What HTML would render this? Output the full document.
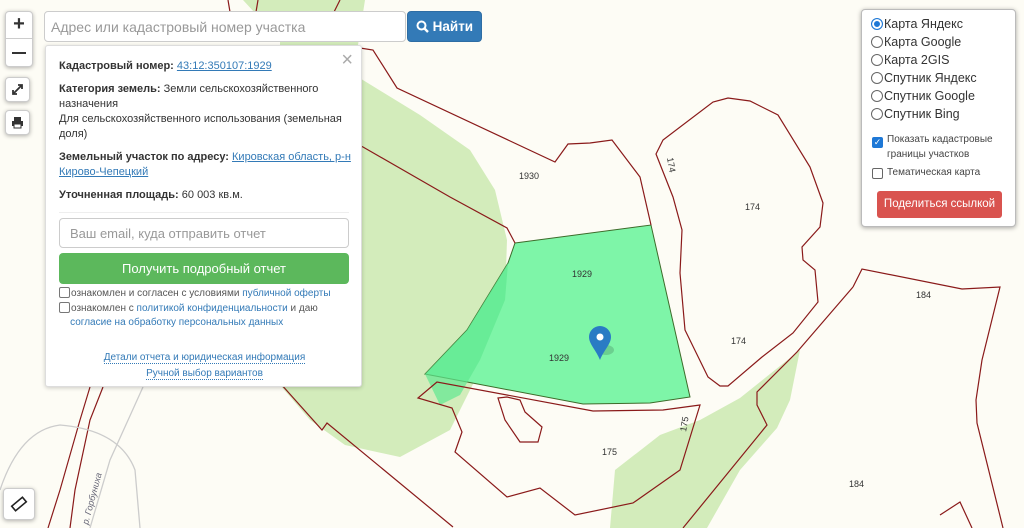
<!DOCTYPE html>
<html><head><meta charset="utf-8"><style>
*{box-sizing:border-box}
body{margin:0;width:1024px;height:528px;overflow:hidden;background:#fdfcf5;font-family:"Liberation Sans",Arial,sans-serif;position:relative}
svg.map{position:absolute;left:0;top:0}
.abs{position:absolute}
.btn{position:absolute;background:#fff;border:1px solid #ccc;border-radius:4px;box-shadow:0 1px 4px rgba(0,0,0,.3)}
.panel{left:45px;top:45px;width:317px;height:342px;background:#fff;border:1px solid #ddd;border-radius:3px;box-shadow:0 1px 4px rgba(0,0,0,.2);font-size:11px;color:#333}
.panel p{margin:0;position:absolute;left:13px;line-height:15px;white-space:nowrap}
b{font-weight:bold}
a{color:#337ab7;text-decoration:underline}
.cb{display:inline-block;width:11px;height:11px;border:1px solid #777;border-radius:2px;vertical-align:-2px;margin-right:1px;background:#fff}
.lk{color:#337ab7}
.dl{color:#337ab7;border-bottom:1px dotted #337ab7}
.rp{left:861px;top:9px;width:155px;height:218px;background:#fff;border:1px solid #bbb;border-radius:4px;box-shadow:0 1px 5px rgba(0,0,0,.35);font-size:12.5px;color:#333}
.rd{position:absolute;left:9px;line-height:18px}
.rd i{display:inline-block;width:12px;height:12px;border:1px solid #666;border-radius:50%;vertical-align:-2px;margin-right:1px}
</style></head><body>
<svg class="map" width="1024" height="528" viewBox="0 0 1024 528">
<g fill="#d3ecbb" stroke="none">
<polygon points="243,0 365,0 358,45 358,77 420,115 470,150 495,190 507,240 505,300 475,380 450,430 400,457 345,445 310,420 280,385 280,40"/>
<polygon points="800,350 790,400 777,428 740,470 707,528 610,528 615,470 660,435 700,420 740,398"/>
</g>
<polygon points="515,243 651,225 690,397 650,403 583,404 425,374 467,330 508,263" fill="#7ef5a8" stroke="#3d6b2a" stroke-width="1"/>
<polygon points="425,374 467,330 508,263 505,300 480,360 460,395 440,405" fill="#60e890" opacity=".7"/>
<g fill="none" stroke="#8a1a1a" stroke-width="1.2">
<polyline points="360,48 373,50 397,88 555,162 568,144 590,143 612,140 640,177 651,225"/>
<polyline points="260,100 363,147 450,197 507,228 515,243"/>
<polyline points="228,0 230,12"/><polyline points="258,0 256,12"/><polyline points="340,0 333,14"/>
<polygon points="656,154 663,140 713,102 728,98 750,101 778,115 810,167 823,203 820,227 802,247 803,260 815,270 818,302 793,333 762,357 728,386 720,386 708,377 685,330 680,273 682,230 673,197"/>
<polyline points="853,287 862,269 962,289 1000,287 982,360 976,400 977,423 1003,528"/>
<polyline points="853,287 797,352 757,392 757,405 767,425 683,528"/>
<polyline points="972,528 960,502 940,515"/>
<polygon points="437,382 418,398 452,408 462,432 455,452 507,497 540,488 575,515 633,503 680,470 700,405 663,410 593,411"/>
<polygon points="498,398 507,397 520,400 525,412 542,427 538,442 520,442 505,420"/>
<polyline points="280,383 322,430 327,423 453,527"/>
<polyline points="90,387 80,420 60,490 48,528"/>
<polyline points="103,387 90,420 75,490 70,528"/>
</g>
<g fill="none" stroke="#ccc" stroke-width="1.3">
<polyline points="143,387 110,460 90,528"/>
<path d="M0,490 Q20,430 60,425 Q120,430 135,470 L140,528"/>
</g>
<g font-family="Liberation Sans,Arial,sans-serif" font-size="9" fill="#333">
<text x="519" y="179">1930</text>
<text x="572" y="277">1929</text>
<text x="549" y="361">1929</text>
<text x="745" y="210">174</text>
<text x="731" y="344">174</text>
<text x="916" y="298">184</text>
<text x="849" y="487">184</text>
<text x="602" y="455">175</text>
<text x="667" y="158" transform="rotate(80 667 158)">174</text>
<text x="686" y="432" transform="rotate(-80 686 432)">175</text>
<text x="88" y="525" transform="rotate(-75 88 525)" fill="#667" font-style="italic">р. Горбуниха</text>
</g>
<g transform="translate(600,330)">
<ellipse cx="6" cy="20" rx="8" ry="5" fill="#000" opacity=".15"/>
<path d="M0,30 C-4,20 -11,14 -11,7 A11,11 0 0 1 11,7 C11,14 4,20 0,30Z" fill="#2a7bc4"/>
<circle cx="0" cy="7" r="3.5" fill="#fff"/>
</g>
</svg>

<div class="btn" style="left:5px;top:11px;width:28px;height:56px"></div>
<div class="abs" style="left:6px;top:38px;width:26px;height:1px;background:#ccc"></div>
<div class="abs" style="left:5px;top:11px;width:28px;height:27px;text-align:center;font:bold 20px/27px 'Liberation Sans';color:#333">+</div>
<div class="abs" style="left:12px;top:52px;width:14px;height:2px;background:#333"></div>
<div class="btn" style="left:5px;top:77px;width:25px;height:25px"></div>
<svg class="abs" style="left:10px;top:82px" width="15" height="15"><path d="M3,12 L12,3 M8,3 L12,3 L12,7 M3,8 L3,12 L7,12" stroke="#333" stroke-width="1.8" fill="none"/></svg>
<div class="btn" style="left:5px;top:110px;width:25px;height:25px"></div>
<svg class="abs" style="left:10px;top:115px" width="15" height="15"><rect x="4" y="2" width="7" height="4" fill="#333"/><rect x="2" y="6" width="11" height="5" fill="#333"/><rect x="4" y="9" width="7" height="4" fill="#fff" stroke="#333"/></svg>
<div class="btn" style="left:3px;top:488px;width:32px;height:32px"></div>
<svg class="abs" style="left:9px;top:494px" width="20" height="20"><rect x="3" y="7" width="14" height="6" transform="rotate(-40 10 10)" fill="#fff" stroke="#222" stroke-width="1.6"/></svg>

<div class="abs" style="left:44px;top:11px;width:362px;height:31px;background:#fff;border:1px solid #ccc;border-radius:4px;font-size:14px;color:#999;padding:7px 6px">Адрес или кадастровый номер участка</div>
<div class="abs" style="left:407px;top:11px;width:75px;height:31px;background:#337ab7;border:1px solid #2e6da4;border-radius:4px;color:#fff;font-size:13.5px;font-weight:bold;line-height:29px;text-align:center"><svg width="13" height="13" style="vertical-align:-2px"><circle cx="5.5" cy="5.5" r="4" stroke="#fff" stroke-width="2" fill="none"/><path d="M8.5,8.5 L12,12" stroke="#fff" stroke-width="2.4"/></svg> Найти</div>

<div class="abs panel">
<div class="abs" style="right:8px;top:4px;font-size:20px;color:#aaa;line-height:20px">×</div>
<p style="top:13px"><b>Кадастровый номер:</b> <a>43:12:350107:1929</a></p>
<p style="top:36px"><b>Категория земель:</b> Земли сельскохозяйственного<br>назначения<br>Для сельскохозяйственного использования (земельная<br>доля)</p>
<p style="top:104px"><b>Земельный участок по адресу:</b> <a>Кировская область, р-н</a><br><a>Кирово-Чепецкий</a></p>
<p style="top:142px"><b>Уточненная площадь:</b> 60 003 кв.м.</p>
<div class="abs" style="left:13px;top:166px;width:290px;height:1px;background:#eee"></div>
<div class="abs" style="left:13px;top:172px;width:290px;height:30px;border:1px solid #ccc;border-radius:4px;font-size:13px;color:#999;padding:7px 10px">Ваш email, куда отправить отчет</div>
<div class="abs" style="left:13px;top:207px;width:290px;height:31px;background:#5cb85c;border-radius:4px;color:#fff;font-size:13px;text-align:center;line-height:31px">Получить подробный отчет</div>
<p style="top:241px;left:13px;font-size:10px;line-height:14.5px;color:#555"><span class="cb"></span>ознакомлен и согласен с условиями <span class="lk">публичной оферты</span><br><span class="cb"></span>ознакомлен с <span class="lk">политикой конфиденциальности</span> и даю<br>&nbsp;&nbsp;&nbsp;&nbsp;<span class="lk">согласие на обработку персональных данных</span></p>
<div class="abs" style="left:0;width:317px;top:304px;text-align:center;font-size:10px;line-height:15.5px"><span class="dl">Детали отчета и юридическая информация</span><br><span class="dl">Ручной выбор вариантов</span></div>
</div>

<div class="abs rp">
<div class="rd" style="top:5px"><i style="background:#1e78d6;border-color:#1e78d6;box-shadow:inset 0 0 0 2px #fff"></i>Карта Яндекс</div>
<div class="rd" style="top:23px"><i></i>Карта Google</div>
<div class="rd" style="top:41px"><i></i>Карта 2GIS</div>
<div class="rd" style="top:59px"><i></i>Спутник Яндекс</div>
<div class="rd" style="top:77px"><i></i>Спутник Google</div>
<div class="rd" style="top:95px"><i></i>Спутник Bing</div>
<div class="abs" style="left:10px;top:127px;width:11px;height:11px;background:#1e78d6;border-radius:2px;color:#fff;font-size:9px;line-height:11px;text-align:center">✓</div>
<div class="abs" style="left:25px;top:122px;font-size:10px;line-height:15px;color:#444">Показать кадастровые<br>границы участков</div>
<div class="abs" style="left:10px;top:158px;width:11px;height:11px;border:1px solid #666;border-radius:2px"></div>
<div class="abs" style="left:25px;top:157px;font-size:10px;color:#444">Тематическая карта</div>
<div class="abs" style="left:15px;top:181px;width:125px;height:27px;background:#d9534f;border-radius:3px;color:#fff;font-size:11.5px;text-align:center;line-height:27px">Поделиться ссылкой</div>
</div>
</body></html>
